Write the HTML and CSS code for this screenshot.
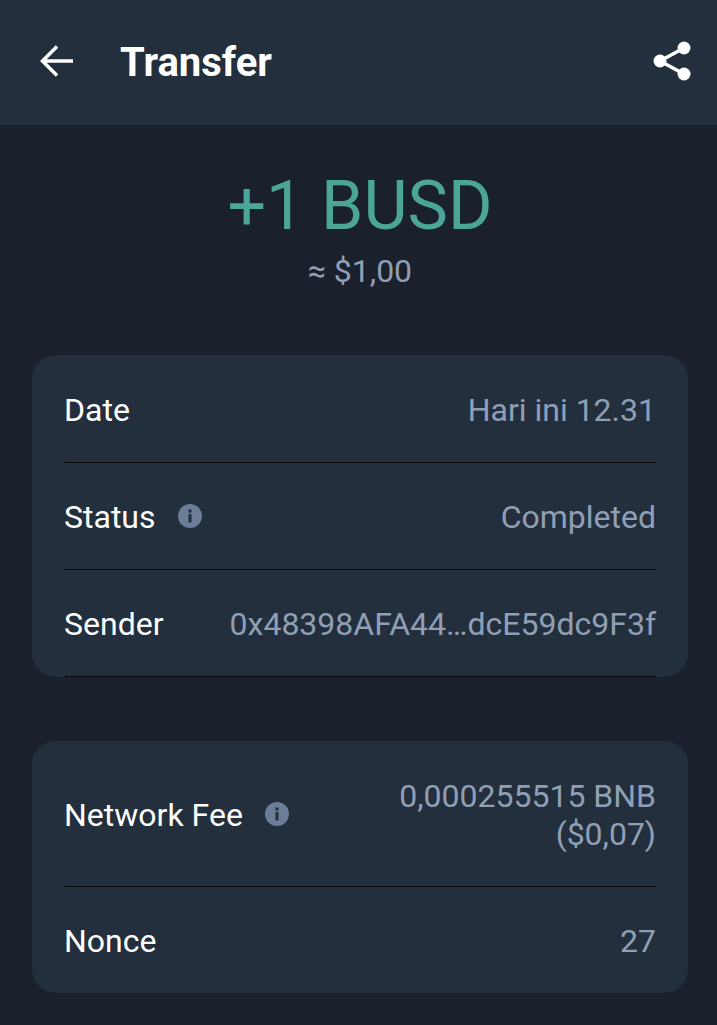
FILE: index.html
```html
<!DOCTYPE html>
<html lang="en">
<head>
<meta charset="utf-8">
<title>Transfer</title>
<link rel="stylesheet" href="styles.css">
</head>
<body>
<header class="bar">
  <svg class="back" width="36" height="36" viewBox="0 0 36 36" fill="none" stroke="#fff" stroke-width="3.500"><path d="M34 18H4M18 3.500 3.500 18 18 32.500"/></svg>
  <h1 class="title">Transfer</h1>
  <svg class="share" width="38" height="42" viewBox="0 0 38 42" fill="#fff"><circle cx="31" cy="8" r="6.500"/><circle cx="7" cy="21" r="6.500"/><circle cx="31" cy="34" r="6.500"/><path d="M31 8 7 21l24 13" fill="none" stroke="#fff" stroke-width="3.500"/></svg>
</header>
<section class="amount">
  <div class="big">+1 BUSD</div>
  <div class="fiat">≈ $1,00</div>
</section>
<section class="card">
  <div class="row"><span class="label">Date</span><span class="value">Hari ini 12.31</span></div>
  <div class="row"><span class="label">Status<svg class="info" width="24" height="24" viewBox="0 0 24 24"><circle cx="12" cy="12" r="12" fill="#6c7d98"/><rect x="10.500" y="10" width="3" height="8.500" fill="#232f3d"/><rect x="10.500" y="5.500" width="3" height="3" fill="#232f3d"/></svg></span><span class="value">Completed</span></div>
  <div class="row"><span class="label">Sender</span><span class="value">0x48398AFA44…dcE59dc9F3f</span></div>
</section>
<section class="card">
  <div class="row tall"><span class="label">Network Fee<svg class="info" width="24" height="24" viewBox="0 0 24 24"><circle cx="12" cy="12" r="12" fill="#6c7d98"/><rect x="10.500" y="10" width="3" height="8.500" fill="#232f3d"/><rect x="10.500" y="5.500" width="3" height="3" fill="#232f3d"/></svg></span><span class="value">0,000255515 BNB<br>($0,07)</span></div>
  <div class="row last"><span class="label">Nonce</span><span class="value">27</span></div>
</section>
</body>
</html>
```
FILE: styles.css
```css
* { box-sizing: border-box; }
html, body { margin: 0; height: 100%; }
body {
  background: #1a212c;
  font-family: Roboto, "Noto Sans", sans-serif;
  overflow: hidden;
}
.bar {
  height: 125px;
  background: #232f3d;
  display: flex;
  align-items: center;
  padding: 0 26px 0 39px;
}
.back { flex: none; margin-bottom: 3px; }
.title {
  margin: 1px 0 0 45px;
  flex: 1;
  font-size: 40px;
  font-weight: 700;
  color: #fff;
  line-height: 44px;
}
.share { flex: none; margin-bottom: 4px; }
.amount {
  display: flex;
  flex-direction: column;
  align-items: center;
  padding: 41px 0 0 3px;
  height: 230px;
}
.big {
  font-size: 68px;
  font-weight: 400;
  line-height: 80px;
  color: #4ca698;
}
.fiat {
  font-size: 32px;
  font-weight: 400;
  line-height: 37px;
  margin-top: 7px;
  color: #909fb5;
}
.card {
  margin: 0 29px 64px 32px;
  background: #232f3d;
  border-radius: 24px;
  padding: 1px 32px 0 33px;
}
.row {
  height: 107px;
  padding-top: 2px;
  display: flex;
  justify-content: space-between;
  align-items: center;
  border-bottom: 1px solid #05080c;
}
.tall { height: 145px; }
.last { height: 106px; border-bottom: 0; }
.label {
  display: flex;
  align-items: center;
  margin-left: -1px;
  font-size: 32px;
  color: #fff;
  white-space: nowrap;
}
.info { margin: -2px 0 0 22px; flex: none; }
.value {
  font-size: 32px;
  font-weight: 400;
  line-height: 38px;
  color: #909fb5;
  text-align: right;
  white-space: nowrap;
}
```
